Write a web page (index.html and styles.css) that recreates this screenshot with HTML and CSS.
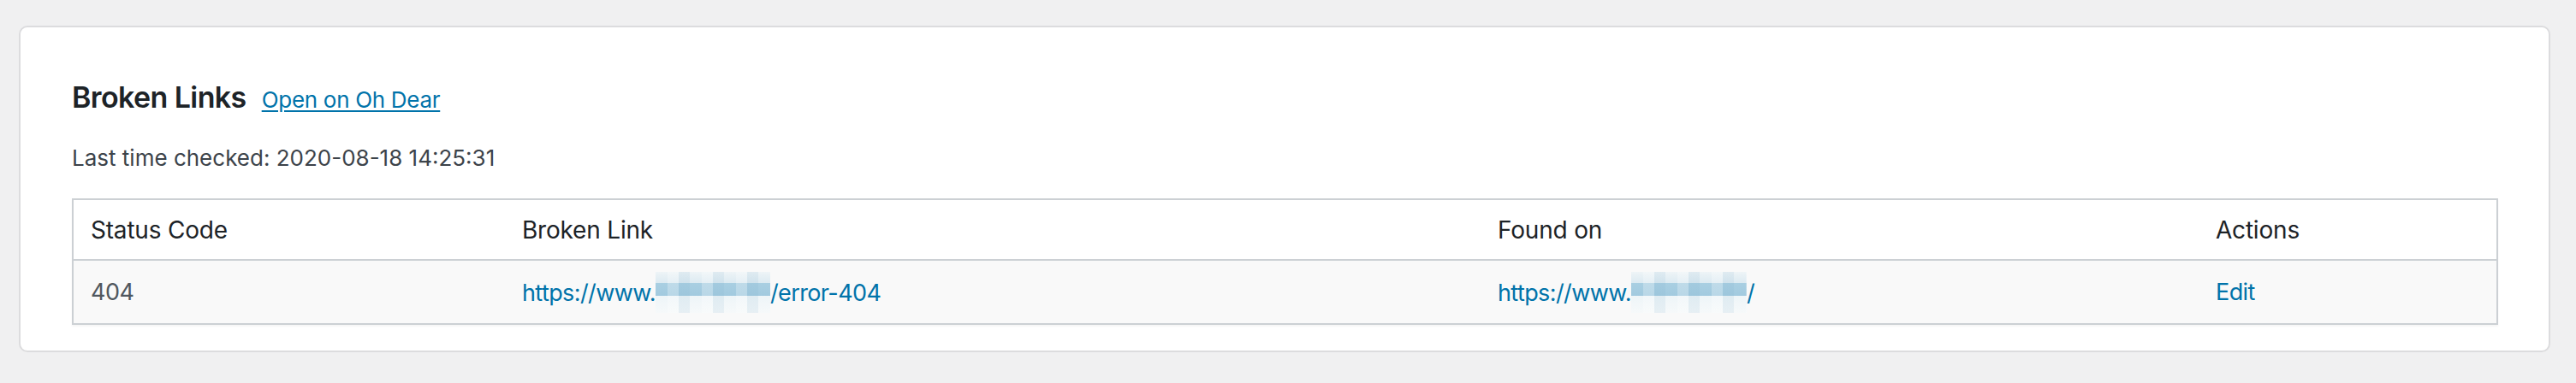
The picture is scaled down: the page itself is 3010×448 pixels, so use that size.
FILE: index.html
```html
<!DOCTYPE html>
<html lang="en">
<head>
<meta charset="utf-8">
<title>Broken Links</title>
<link rel="stylesheet" href="styles.css">
</head>
<body>
<div class="page">
  <section class="card">
    <div class="title-row">
      <h2 class="title">Broken Links</h2>
      <a class="title-link" href="#">Open on Oh Dear</a>
    </div>
    <p class="checked">Last time checked: 2020-08-18 14:25:31</p>
    <table class="links">
      <thead>
        <tr>
          <th class="col-status">Status Code</th>
          <th class="col-broken">Broken Link</th>
          <th class="col-found">Found on</th>
          <th class="col-actions">Actions</th>
        </tr>
      </thead>
      <tbody>
        <tr>
          <td class="status">404</td>
          <td><a href="#">https://www.<span class="blur blur-a"></span>/error-404</a></td>
          <td><a href="#">https://www.<span class="blur blur-b"></span>/</a></td>
          <td><a href="#">Edit</a></td>
        </tr>
      </tbody>
    </table>
  </section>
</div>
</body>
</html>
```
FILE: styles.css
```css
html, body {
  margin: 0;
  padding: 0;
}
body {
  background: #f0f0f1;
  font-family: Inter, Roboto, "Liberation Sans", sans-serif;
  color: #3c434a;
  width: 3010px;
  height: 448px;
  overflow: hidden;
}
.page {
  padding: 30px 30px 0 22px;
}
.card {
  background: #fff;
  border: 2px solid #dcdcde;
  border-radius: 10px;
  padding: 60px 59px 30px 60px;
}
.title-row {
  display: flex;
  align-items: baseline;
  gap: 18px;
}
.title {
  margin: 0;
  font-size: 34px;
  line-height: 44px;
  font-weight: 600;
  letter-spacing: -0.6px;
  color: #1d2327;
}
.title-link {
  font-size: 26px;
  letter-spacing: -0.3px;
  color: #0073aa;
  text-decoration: underline;
  text-underline-offset: 3px;
}
.checked {
  margin: 31px 0 29px;
  font-size: 26px;
  line-height: 36px;
  color: #3c434a;
}
.links {
  width: 100%;
  border-collapse: collapse;
  border: 2px solid #ccd0d4;
  font-size: 28px;
  box-shadow: 0 2px 2px rgba(0,0,0,0.04);
}
.links th, .links td {
  text-align: left;
  padding: 0 20px;
  font-weight: 400;
}
.links th {
  height: 69px;
  color: #1d2327;
  letter-spacing: -0.2px;
  border-bottom: 2px solid #ccd0d4;
  background: #fff;
}
.links td {
  height: 73px;
  font-size: 27px;
  background: #f9f9f9;
}
.links td.status {
  color: #50575e;
  letter-spacing: -0.5px;
}
.col-status { width: 464px; }
.col-broken { width: 1100px; }
.col-found { width: 799px; }
.links a {
  color: #0073aa;
  text-decoration: none;
  letter-spacing: -0.6px;
}
.blur {
  display: inline-block;
  height: 48px;
  vertical-align: -14px;
  background:
    repeating-linear-gradient(to right,
      rgba(255,255,255,0) 0, rgba(255,255,255,0) 14px,
      rgba(255,255,255,0.25) 14px, rgba(255,255,255,0.25) 27px,
      rgba(120,170,200,0.12) 27px, rgba(120,170,200,0.12) 40px),
    linear-gradient(to bottom,
      #eef4f7 0, #dceaf1 13px,
      #a9cfe2 13px, #a2cadf 28px,
      #eef5f8 28px, #f6f9fa 48px);
}
.blur-a { width: 134px; }
.blur-b { width: 135px; }
```
